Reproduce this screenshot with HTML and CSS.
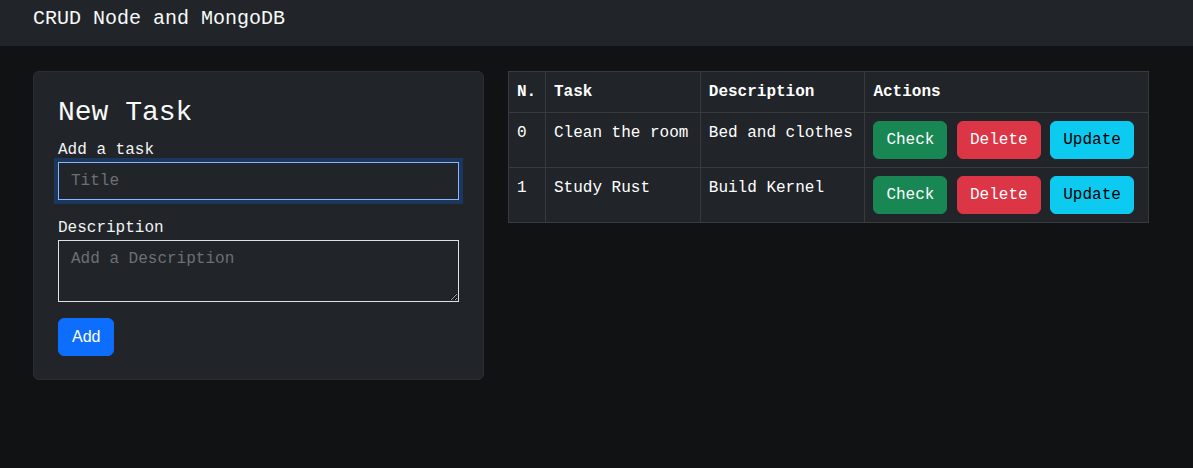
FILE: index.html
```html
<!DOCTYPE html>
<html lang="en">
<head>
<meta charset="utf-8">
<title>CRUD Node and MongoDB</title>
<link rel="stylesheet" href="styles.css">
</head>
<body>
<nav class="navbar">
  <span class="brand">CRUD Node and MongoDB</span>
</nav>
<main class="page">
  <section class="card">
    <h3 class="card-title">New Task</h3>
    <form class="task-form">
      <div class="field">
        <label class="label" for="title">Add a task</label>
        <input class="input input-focus" id="title" type="text" placeholder="Title">
      </div>
      <div class="field">
        <label class="label" for="desc">Description</label>
        <textarea class="input textarea" id="desc" rows="2" placeholder="Add a Description"></textarea>
      </div>
      <button class="btn btn-primary" type="button">Add</button>
    </form>
  </section>
  <section class="table-wrap">
    <table class="table">
      <thead>
        <tr><th>N.</th><th>Task</th><th>Description</th><th>Actions</th></tr>
      </thead>
      <tbody>
        <tr>
          <td>0</td><td>Clean the room</td><td>Bed and clothes</td>
          <td><button class="btn btn-success">Check</button> <button class="btn btn-danger">Delete</button> <button class="btn btn-info">Update</button></td>
        </tr>
        <tr>
          <td>1</td><td>Study Rust</td><td>Build Kernel</td>
          <td><button class="btn btn-success">Check</button> <button class="btn btn-danger">Delete</button> <button class="btn btn-info">Update</button></td>
        </tr>
      </tbody>
    </table>
  </section>
</main>
</body>
</html>
```
FILE: styles.css
```css
* { box-sizing: border-box; }
html, body { margin: 0; padding: 0; }
body {
  background: #111213;
  color: #dee2e6;
  font-family: "Liberation Mono", "DejaVu Sans Mono", monospace;
  font-size: 16px;
  line-height: 1.5;
  min-height: 468px;
}
.navbar {
  background: #212529;
  height: 46px;
  padding: 4px 33px 0;
}
.brand {
  display: block;
  font-size: 20px;
  line-height: 30px;
  color: #f8f9fa;
}
.page {
  display: flex;
  align-items: flex-start;
  gap: 24px;
  padding: 25px 33px;
}
.card {
  width: 451px;
  flex: none;
  background: #212529;
  border: 1px solid #2a2e33;
  border-radius: 6px;
  padding: 24px 24px 23px;
}
.card-title {
  margin: 0 0 8px;
  font-size: 28px;
  font-weight: 400;
  line-height: 1.2;
  color: #f8f9fa;
}
.task-form { display: flex; flex-direction: column; align-items: flex-start; }
.field { width: 100%; margin-bottom: 16px; display: flex; flex-direction: column; }
.label { color: #f1f3f5; line-height: 24px; }
.input {
  width: 100%;
  font: inherit;
  color: #dee2e6;
  background: #212529;
  border: 1px solid #dee2e6;
  border-radius: 0;
  padding: 6px 12px;
  line-height: 24px;
  height: 38px;
  outline: none;
}
.input::placeholder { color: #6c7075; }
.input-focus {
  border-color: #86b7fe;
  box-shadow: 0 0 0 4px rgba(13, 110, 253, 0.25);
}
.textarea { height: 62px; resize: vertical; display: block; }
.btn {
  font: inherit;
  font-size: 16px;
  line-height: 24px;
  padding: 6px 12px;
  border: 1px solid transparent;
  border-radius: 6px;
  cursor: pointer;
  color: #fff;
  vertical-align: middle;
}
.btn-primary {
  background: #0d6efd;
  border-color: #0d6efd;
  font-family: "Liberation Sans", Arial, sans-serif;
  padding: 6px 13px;
}
.btn-success { background: #198754; border-color: #198754; }
.btn-danger { background: #dc3545; border-color: #dc3545; }
.btn-info { background: #0dcaf0; border-color: #0dcaf0; color: #000; }
.table-wrap { width: 641px; flex: none; }
.table {
  width: 100%;
  border-collapse: collapse;
  background: #212529;
  color: #fff;
}
.table th, .table td {
  border: 1px solid #373b3e;
  padding: 8px;
  text-align: left;
  vertical-align: top;
  line-height: 24px;
  white-space: nowrap;
}
.table th { font-weight: 700; }
```
